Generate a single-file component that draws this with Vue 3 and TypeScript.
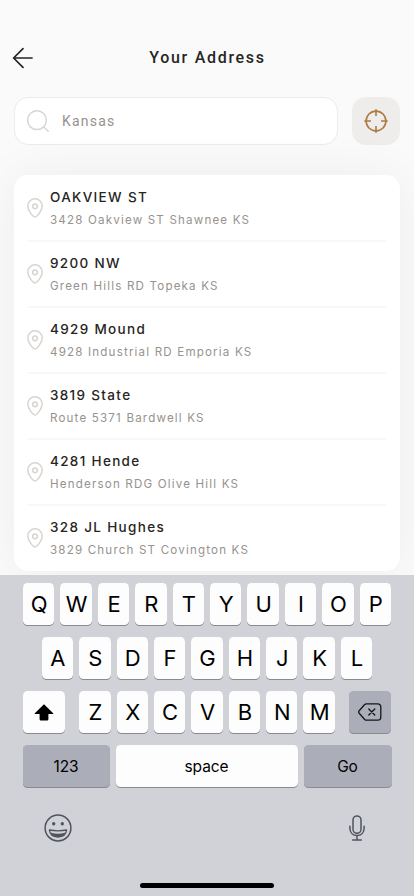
<script setup lang="ts">
interface Place {
  name: string
  detail: string
}

const places: Place[] = [
  { name: 'OAKVIEW ST', detail: '3428 Oakview ST Shawnee KS' },
  { name: '9200 NW', detail: 'Green Hills RD Topeka KS' },
  { name: '4929 Mound', detail: '4928 Industrial RD Emporia KS' },
  { name: '3819 State', detail: 'Route 5371 Bardwell KS' },
  { name: '4281 Hende', detail: 'Henderson RDG Olive Hill KS' },
  { name: '328 JL Hughes', detail: '3829 Church ST Covington KS' },
]

const topRow: string[] = [...'QWERTYUIOP']
const middleRow: string[] = [...'ASDFGHJKL']
const bottomRow: string[] = [...'ZXCVBNM']
</script>

<template>
  <div class="screen">
    <header class="header">
      <button class="back" aria-label="Back">
        <svg width="22" height="22" viewBox="0 0 22 22" fill="none" stroke="#272522" stroke-width="1.7" stroke-linecap="round" stroke-linejoin="round">
          <path d="M20 11H1.6M11 1.7L1.6 11L11 20.3" />
        </svg>
      </button>
      <h1 class="title">Your Address</h1>
    </header>

    <div class="search-row">
      <div class="search">
        <svg width="24" height="24" viewBox="0 0 24 24" fill="none" stroke="#d9d4d0" stroke-width="1.5" stroke-linecap="round">
          <circle cx="11" cy="11.2" r="9.4" />
          <path d="M17.8 18L22.2 22.2" />
        </svg>
        <span class="query">Kansas</span>
      </div>
      <button class="locate" aria-label="Use current location">
        <svg width="24" height="24" viewBox="0 0 24 24" fill="none" stroke="#ad7a43" stroke-width="1.6">
          <circle cx="12" cy="12" r="9.9" />
          <path d="M12 .3V7M12 17V23.7M.3 12H7M17 12H23.7" />
        </svg>
      </button>
    </div>

    <ul class="places">
      <li v-for="place in places" :key="place.name" class="place">
        <svg class="pin" width="16" height="20" viewBox="0 0 16 20" fill="none" stroke="#d9d4d0" stroke-width="1.5" stroke-linejoin="round">
          <path d="M8 19.1C6.4 19.1 .8 12.8 .8 8.1C.8 4 3.9 .8 8 .8C12.1 .8 15.2 4 15.2 8.1C15.2 12.8 9.6 19.1 8 19.1Z" />
          <circle cx="8" cy="8.3" r="2.4" />
        </svg>
        <div class="copy">
          <div class="name">{{ place.name }}</div>
          <div class="detail">{{ place.detail }}</div>
        </div>
      </li>
    </ul>

    <section class="keyboard">
      <div class="keys">
        <div v-for="k in topRow" :key="k" class="key letter">{{ k }}</div>
      </div>
      <div class="keys">
        <div v-for="k in middleRow" :key="k" class="key letter">{{ k }}</div>
      </div>
      <div class="keys spread">
        <div class="key modifier">
          <svg width="20" height="17" viewBox="0 0 20 17">
            <path d="M10 .2L19.2 9.3Q19.6 10.1 18.8 10.1H14.4V15.2Q14.4 16.4 13.2 16.4H6.8Q5.6 16.4 5.6 15.2V10.1H1.2Q.4 10.1 .8 9.3Z" fill="#000" />
          </svg>
        </div>
        <div class="letters">
          <div v-for="k in bottomRow" :key="k" class="key letter">{{ k }}</div>
        </div>
        <div class="key modifier dark">
          <svg width="24" height="18" viewBox="0 0 24 18" fill="none" stroke="#15161a" stroke-width="1.3" stroke-linecap="round" stroke-linejoin="round">
            <path d="M8.4 .8H19.6Q22.8 .8 22.8 4V14Q22.8 17.2 19.6 17.2H8.4Q7.4 17.2 6.7 16.5L1.2 10.3Q.2 9 1.2 7.7L6.7 1.5Q7.4 .8 8.4 .8Z" />
            <path d="M10.8 6L16.8 12M16.8 6L10.8 12" />
          </svg>
        </div>
      </div>
      <div class="keys">
        <div class="key word dark numeric">123</div>
        <div class="key word space">space</div>
        <div class="key word dark go">Go</div>
      </div>
      <div class="tools">
        <svg width="28" height="28" viewBox="0 0 28 28" fill="none" stroke="#50545c" stroke-width="1.5">
          <circle cx="14" cy="14" r="12.9" />
          <circle cx="9.7" cy="9.8" r="1.7" fill="#50545c" stroke="none" />
          <circle cx="18.3" cy="9.8" r="1.7" fill="#50545c" stroke="none" />
          <path d="M5.4 16Q14 17.6 22.6 16Q21.8 23 14 23Q6.2 23 5.4 16Z" stroke-width="1.3" stroke-linejoin="round" />
          <path d="M6.4 18.6Q14 21 21.6 18.6Q20 23 14 23Q8 23 6.4 18.6Z" fill="#50545c" stroke="none" />
        </svg>
        <svg width="16" height="26" viewBox="0 0 16 26" fill="none" stroke="#50545c" stroke-width="1.5" stroke-linecap="round">
          <rect x="4" y=".9" width="8" height="17.4" rx="4" />
          <path d="M.9 11.2V13.3C.9 17.6 3.8 20.6 8 20.6C12.2 20.6 15.1 17.6 15.1 13.3V11.2M8 20.6V25M3.7 25.1H12.3" />
        </svg>
      </div>
      <div class="home-bar"></div>
    </section>
  </div>
</template>

<style>
body {
  margin: 0;
}
</style>

<style scoped>
.screen {
  box-sizing: border-box;
  width: 414px;
  height: 896px;
  overflow: hidden;
  display: flex;
  flex-direction: column;
  background: #fafafa;
  font-family: Inter, 'Liberation Sans', sans-serif;
}

button {
  padding: 0;
  border: 0;
  background: none;
  display: flex;
}

.header {
  height: 22px;
  padding: 47px 12px 0;
  display: grid;
  grid-template-columns: 22px 1fr 22px;
  align-items: center;
}

.title {
  margin: 0;
  padding-left: 1px;
  text-align: center;
  font-family: Roboto, Inter, sans-serif;
  font-size: 16px;
  font-weight: 500;
  line-height: 22px;
  letter-spacing: 1.7px;
  color: #272522;
}

.search-row {
  display: flex;
  gap: 14px;
  padding: 28px 14px 30px;
}

.search {
  box-sizing: border-box;
  flex: 1;
  height: 48px;
  padding: 0 11px;
  display: flex;
  align-items: center;
  gap: 12px;
  border: 1px solid #ebebea;
  border-radius: 14px;
  background: #fff;
}

.query {
  font-family: Roboto, Inter, sans-serif;
  font-size: 14px;
  letter-spacing: 1.2px;
  color: #97928d;
}

.locate {
  width: 48px;
  height: 48px;
  align-items: center;
  justify-content: center;
  border-radius: 14px;
  background: #efedeb;
}

.places {
  box-sizing: border-box;
  list-style: none;
  margin: 0 14px 4px;
  padding: 1px 14px 0;
  height: 396px;
  border-radius: 14px;
  background: #fff;
  box-shadow: 0 0 50px rgba(0, 0, 0, 0.055);
}

.place {
  box-sizing: border-box;
  height: 66px;
  display: flex;
  align-items: center;
  gap: 7px;
  border-bottom: 2px solid #f7f7f7;
}

.place:last-child {
  border-bottom-color: transparent;
}

.pin {
  margin-left: -1px;
}

.copy {
  display: flex;
  flex-direction: column;
  gap: 3px;
}

.name {
  font-size: 13.5px;
  font-weight: 500;
  line-height: 20px;
  letter-spacing: 1.33px;
  color: #272522;
}

.detail {
  font-size: 11.6px;
  line-height: 20px;
  letter-spacing: 1.17px;
  color: #97928d;
}

.keyboard {
  flex: 1;
  padding: 8px 22.5px 0;
  display: flex;
  flex-direction: column;
  gap: 12px;
  background: #d1d2d7;
}

.keys {
  display: flex;
  justify-content: center;
  gap: 6px;
}

.spread {
  justify-content: space-between;
}

.letters {
  display: flex;
  gap: 6px;
}

.key {
  box-sizing: border-box;
  height: 42px;
  display: flex;
  align-items: center;
  justify-content: center;
  border-radius: 4.6px;
  background: #fdfdfe;
  box-shadow: 0 1px 0 #898a8d;
  color: #000;
}

.letter {
  width: 31.4px;
  padding-left: 1px;
  font-size: 22px;
}

.modifier {
  width: 42px;
}

.dark {
  background: #abadb9;
}

.word {
  font-size: 15.5px;
  letter-spacing: -0.1px;
}

.numeric {
  width: 87px;
}

.space {
  width: 182px;
}

.go {
  width: 88px;
}

.tools {
  display: flex;
  justify-content: space-between;
  align-items: center;
  padding: 15px 26.5px 0 21.5px;
}

.home-bar {
  width: 134px;
  height: 5px;
  margin: 29px auto 0;
  border-radius: 3px;
  background: #000;
}
</style>
